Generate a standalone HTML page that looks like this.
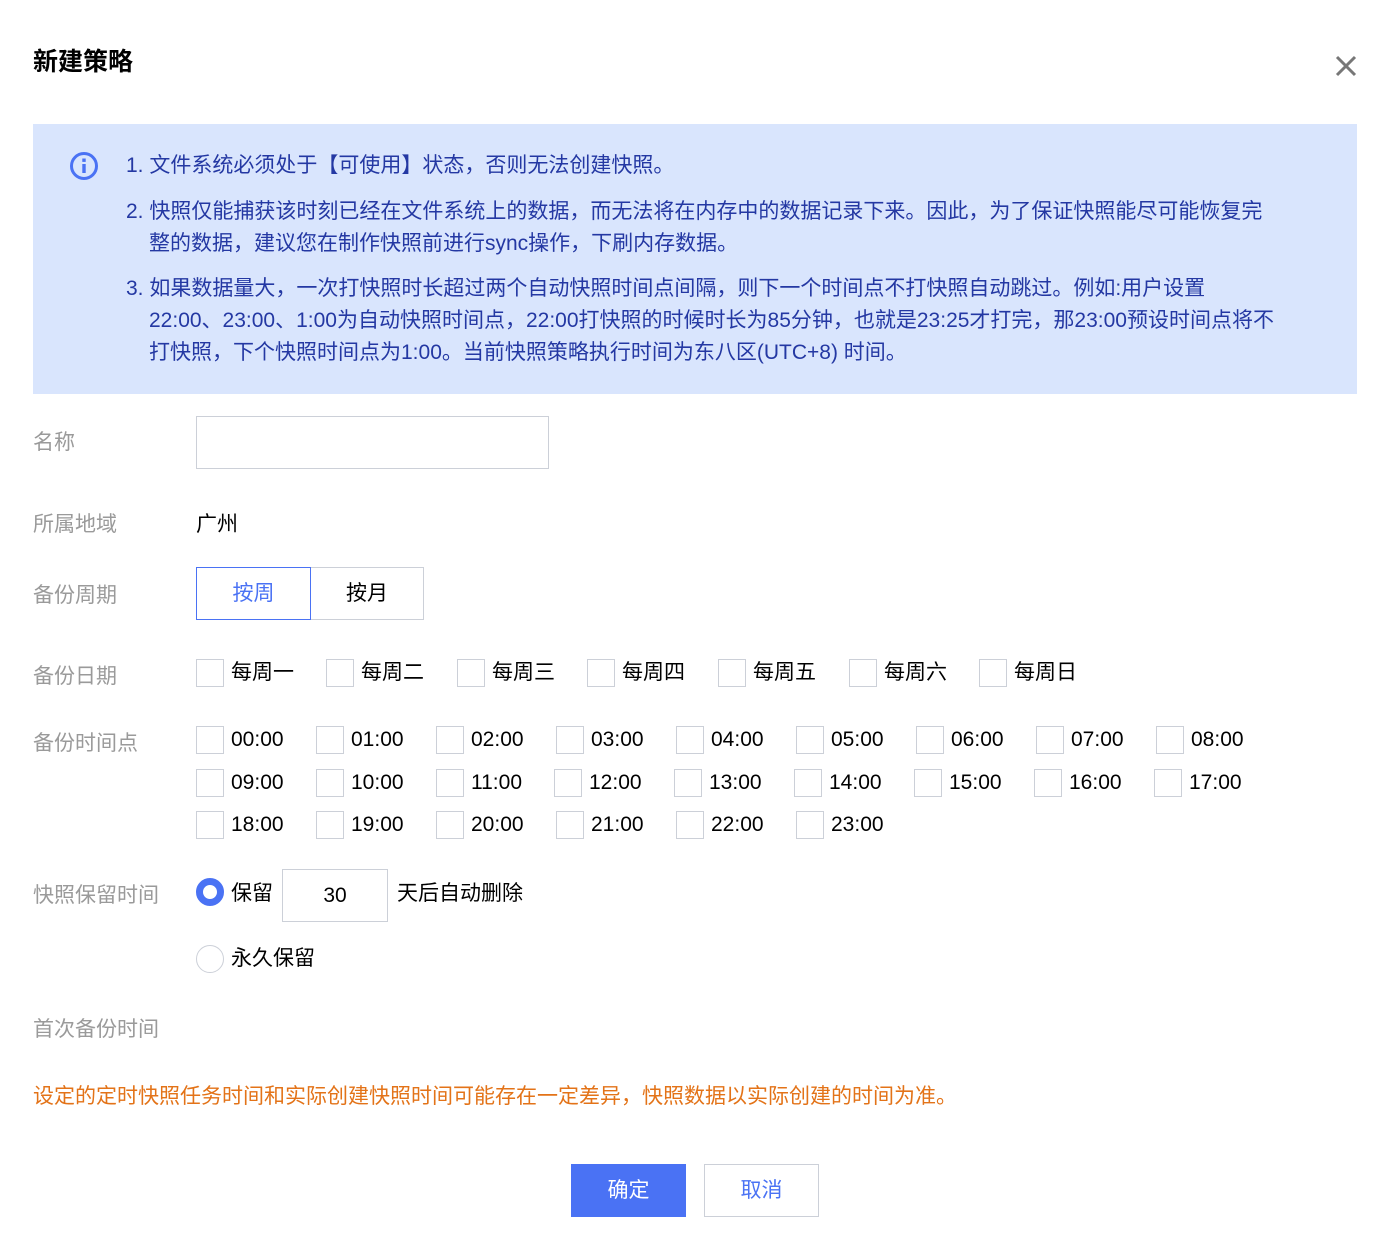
<!DOCTYPE html>
<html><head><meta charset="utf-8"><style>
*{margin:0;padding:0;box-sizing:border-box}
body{width:1387px;height:1247px;background:#fff;font-family:"Liberation Sans","Noto Sans CJK SC",sans-serif;color:#000;position:relative;overflow:hidden;font-size:21px}
.a{position:absolute;white-space:nowrap}
.lbl{color:#9a9a9a;font-size:21px;margin-top:-2px}
.info{position:absolute;left:33px;top:124px;width:1324px;height:270px;background:#d9e5fd}
.it{position:absolute;color:#2438a3;font-size:21px;line-height:32px;white-space:nowrap;margin-top:1px}
.cb{position:absolute;width:28px;height:28px;border:1px solid #ccd0d8;background:#fff}
.ct{position:absolute;font-size:21px;line-height:28px;color:#000}
</style></head><body>
<div class="a" style="left:33px;top:46px;font-size:25px;font-weight:bold;line-height:32px">新建策略</div>
<svg class="a" style="left:1334px;top:54px" width="24" height="24" viewBox="0 0 24 24"><path d="M3 3L21 21M21 3L3 21" stroke="#777" stroke-width="3"/></svg>

<div class="info"></div>
<svg class="a" style="left:69px;top:151px" width="30" height="30" viewBox="0 0 30 30"><circle cx="15" cy="15" r="12.5" fill="none" stroke="#4a72f4" stroke-width="3"/><rect x="13.3" y="13" width="3.4" height="9" fill="#4a72f4"/><rect x="13.3" y="7.5" width="3.4" height="3.4" fill="#4a72f4"/></svg>
<div class="it" style="left:126px;top:149px">1. 文件系统必须处于【可使用】状态，否则无法创建快照。</div>
<div class="it" style="left:126px;top:195px">2. 快照仅能捕获该时刻已经在文件系统上的数据，而无法将在内存中的数据记录下来。因此，为了保证快照能尽可能恢复完</div>
<div class="it" style="left:149px;top:227px">整的数据，建议您在制作快照前进行sync操作，下刷内存数据。</div>
<div class="it" style="left:126px;top:272px">3. 如果数据量大，一次打快照时长超过两个自动快照时间点间隔，则下一个时间点不打快照自动跳过。例如:用户设置</div>
<div class="it" style="left:149px;top:304px">22:00、23:00、1:00为自动快照时间点，22:00打快照的时候时长为85分钟，也就是23:25才打完，那23:00预设时间点将不</div>
<div class="it" style="left:149px;top:336px">打快照，下个快照时间点为1:00。当前快照策略执行时间为东八区(UTC+8) 时间。</div>

<div class="a lbl" style="left:33px;top:428px">名称</div>
<div class="a" style="left:196px;top:416px;width:353px;height:53px;border:1px solid #ccd0d8"></div>

<div class="a lbl" style="left:33px;top:510px">所属地域</div>
<div class="a" style="left:196px;top:508px">广州</div>

<div class="a lbl" style="left:33px;top:581px">备份周期</div>
<div class="a" style="left:310px;top:567px;width:114px;height:53px;border:1px solid #ccd0d8;text-align:center;line-height:51px">按月</div>
<div class="a" style="left:196px;top:567px;width:115px;height:53px;border:1px solid #4a72f4;text-align:center;line-height:51px;color:#4a72f4">按周</div>

<div class="a lbl" style="left:33px;top:662px">备份日期</div>
<div class="cb" style="left:196px;top:659px"></div><div class="ct a" style="left:231px;top:659px">每周一</div>
<div class="cb" style="left:326px;top:659px"></div><div class="ct a" style="left:361px;top:659px">每周二</div>
<div class="cb" style="left:457px;top:659px"></div><div class="ct a" style="left:492px;top:659px">每周三</div>
<div class="cb" style="left:587px;top:659px"></div><div class="ct a" style="left:622px;top:659px">每周四</div>
<div class="cb" style="left:718px;top:659px"></div><div class="ct a" style="left:753px;top:659px">每周五</div>
<div class="cb" style="left:849px;top:659px"></div><div class="ct a" style="left:884px;top:659px">每周六</div>
<div class="cb" style="left:979px;top:659px"></div><div class="ct a" style="left:1014px;top:659px">每周日</div>

<div class="a lbl" style="left:33px;top:729px">备份时间点</div>
<div class="cb" style="left:196px;top:726px"></div><div class="ct a" style="left:231px;top:726px">00:00</div>
<div class="cb" style="left:316px;top:726px"></div><div class="ct a" style="left:351px;top:726px">01:00</div>
<div class="cb" style="left:436px;top:726px"></div><div class="ct a" style="left:471px;top:726px">02:00</div>
<div class="cb" style="left:556px;top:726px"></div><div class="ct a" style="left:591px;top:726px">03:00</div>
<div class="cb" style="left:676px;top:726px"></div><div class="ct a" style="left:711px;top:726px">04:00</div>
<div class="cb" style="left:796px;top:726px"></div><div class="ct a" style="left:831px;top:726px">05:00</div>
<div class="cb" style="left:916px;top:726px"></div><div class="ct a" style="left:951px;top:726px">06:00</div>
<div class="cb" style="left:1036px;top:726px"></div><div class="ct a" style="left:1071px;top:726px">07:00</div>
<div class="cb" style="left:1156px;top:726px"></div><div class="ct a" style="left:1191px;top:726px">08:00</div>

<div class="cb" style="left:196px;top:769px"></div><div class="ct a" style="left:231px;top:769px">09:00</div>
<div class="cb" style="left:316px;top:769px"></div><div class="ct a" style="left:351px;top:769px">10:00</div>
<div class="cb" style="left:436px;top:769px"></div><div class="ct a" style="left:471px;top:769px">11:00</div>
<div class="cb" style="left:554px;top:769px"></div><div class="ct a" style="left:589px;top:769px">12:00</div>
<div class="cb" style="left:674px;top:769px"></div><div class="ct a" style="left:709px;top:769px">13:00</div>
<div class="cb" style="left:794px;top:769px"></div><div class="ct a" style="left:829px;top:769px">14:00</div>
<div class="cb" style="left:914px;top:769px"></div><div class="ct a" style="left:949px;top:769px">15:00</div>
<div class="cb" style="left:1034px;top:769px"></div><div class="ct a" style="left:1069px;top:769px">16:00</div>
<div class="cb" style="left:1154px;top:769px"></div><div class="ct a" style="left:1189px;top:769px">17:00</div>

<div class="cb" style="left:196px;top:811px"></div><div class="ct a" style="left:231px;top:811px">18:00</div>
<div class="cb" style="left:316px;top:811px"></div><div class="ct a" style="left:351px;top:811px">19:00</div>
<div class="cb" style="left:436px;top:811px"></div><div class="ct a" style="left:471px;top:811px">20:00</div>
<div class="cb" style="left:556px;top:811px"></div><div class="ct a" style="left:591px;top:811px">21:00</div>
<div class="cb" style="left:676px;top:811px"></div><div class="ct a" style="left:711px;top:811px">22:00</div>
<div class="cb" style="left:796px;top:811px"></div><div class="ct a" style="left:831px;top:811px">23:00</div>

<div class="a lbl" style="left:33px;top:881px">快照保留时间</div>
<div class="a" style="left:196px;top:878px;width:28px;height:28px;border-radius:50%;border:7px solid #4a72f4;background:#fff"></div>
<div class="ct a" style="left:231px;top:880px">保留</div>
<div class="a" style="left:282px;top:869px;width:106px;height:53px;border:1px solid #ccd0d8;text-align:center;line-height:51px">30</div>
<div class="ct a" style="left:397px;top:880px">天后自动删除</div>
<div class="a" style="left:196px;top:945px;width:28px;height:28px;border-radius:50%;border:1px solid #ccd0d8"></div>
<div class="ct a" style="left:231px;top:945px">永久保留</div>

<div class="a lbl" style="left:33px;top:1015px">首次备份时间</div>
<div class="a" style="left:33px;top:1080px;color:#e37318">设定的定时快照任务时间和实际创建快照时间可能存在一定差异，快照数据以实际创建的时间为准。</div>

<div class="a" style="left:571px;top:1164px;width:115px;height:53px;background:#4a72f4;color:#fff;text-align:center;line-height:53px">确定</div>
<div class="a" style="left:704px;top:1164px;width:115px;height:53px;border:1px solid #ccd0d8;color:#4a72f4;text-align:center;line-height:51px">取消</div>
</body></html>
